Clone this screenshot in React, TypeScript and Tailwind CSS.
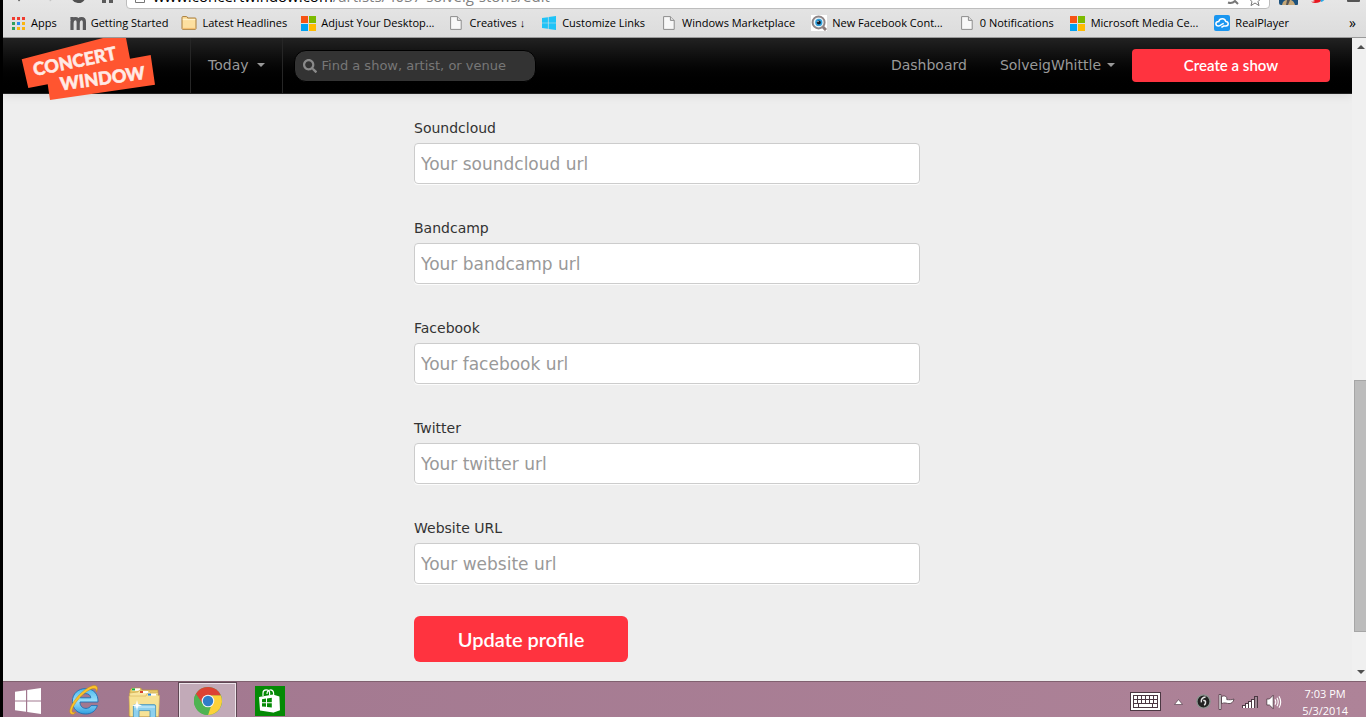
import type { ReactNode } from 'react'
import { FaSearch } from 'react-icons/fa'

type Bookmark = { label: string; icon: ReactNode }

const AppsIcon = () => (
  <svg width="13" height="13" viewBox="0 0 13 13" shapeRendering="crispEdges">
    {['#f03c30', '#f03c30', '#f03c30', '#2ea05c', '#2a8af0', '#fbb50f', '#2ea05c', '#fbb50f', '#fbb50f'].map((fill, i) => (
      <rect key={i} x={(i % 3) * 5} y={Math.floor(i / 3) * 5} width="3" height="3" fill={fill} />
    ))}
  </svg>
)

const MIcon = () => (
  <svg width="16" height="13" viewBox="0 0 16 13" fill="none" stroke="#58585a" strokeWidth="3.2">
    <path d="M2 13V3.5M0.4 1.4H3.2M2 6C2 3 3.6 1.7 5.4 1.7S8.2 3 8.2 5V13M8.2 6C8.2 3 9.8 1.7 11.6 1.7S14.4 3 14.4 5V13" />
  </svg>
)

const FolderIcon = () => (
  <svg width="16" height="14" viewBox="0 0 16 14">
    <path d="M1 12.5V1.5Q1 .6 2 .6H5.5Q6.4.6 6.6 2H14.2Q15 2 15 3V12.5Q15 13.3 14.2 13.3H1.8Q1 13.3 1 12.5Z" fill="#fde0a0" stroke="#a87c3a" />
    <path d="M1.8 3.6H14.2" stroke="#fff4d2" />
    <path d="M1.6 12.4H14.4" stroke="#f6bd6e" />
  </svg>
)

const MicrosoftIcon = () => (
  <svg width="15" height="15" viewBox="0 0 15 15" shapeRendering="crispEdges">
    <rect width="7" height="7" fill="#f65314" />
    <rect x="8" width="7" height="7" fill="#7cbb00" />
    <rect y="8" width="7" height="7" fill="#00a1f1" />
    <rect x="8" y="8" width="7" height="7" fill="#ffbb00" />
  </svg>
)

const PageIcon = () => (
  <svg width="12" height="14" viewBox="0 0 12 14">
    <path d="M.6.6H7.4L11.2 4.4V13.4H.6Z" fill="#f8f8f8" stroke="#8d8d8d" />
    <path d="M7.4.6V4.4H11.2" fill="#e0e0e0" stroke="#8d8d8d" />
  </svg>
)

const WindowsIcon = ({ size, color }: { size: number; color: string }) => (
  <svg width={size} height={size} viewBox="0 0 26 26" fill={color}>
    <path d="M0 3.8L11 2.2V12.4H0ZM12.2 2L26 0V12.4H12.2ZM0 13.6H11V23.8L0 22.2ZM12.2 13.6H26V26L12.2 24Z" />
  </svg>
)

const EyeIcon = () => (
  <svg width="16" height="16" viewBox="0 0 16 16">
    <rect width="16" height="16" fill="#fff" />
    <path d="M11.5 11.5L15 15" stroke="#8a7c7c" strokeWidth="3" />
    <circle cx="7.6" cy="7.4" r="6" fill="#e9f4fa" stroke="#8f8586" strokeWidth="2" />
    <circle cx="7.8" cy="7.4" r="3.6" fill="#2f9fdb" />
    <circle cx="7.8" cy="7.4" r="2" fill="#0c1626" />
    <circle cx="7" cy="6.6" r=".7" fill="#fff" />
  </svg>
)

const RealPlayerIcon = () => (
  <svg width="16" height="16" viewBox="0 0 16 16">
    <rect width="16" height="16" rx="2" fill="#1a96f0" />
    <path d="M7.4 12.4L9.6 11H11.8C13.2 11 14.2 10 14.2 8.8S13.2 6.6 11.8 6.4C11.2 4.6 9.8 3.8 8.4 3.8C6.6 3.8 5.2 4.8 4.8 6.4C3 6.4 1.9 7.4 1.9 8.7C1.9 10.2 3.2 11 4.6 11C6.8 11 7.4 8.6 9.8 8.4" fill="none" stroke="#fff" strokeWidth="1.5" />
  </svg>
)

const BOOKMARKS: Bookmark[] = [
  { label: 'Apps', icon: <AppsIcon /> },
  { label: 'Getting Started', icon: <MIcon /> },
  { label: 'Latest Headlines', icon: <FolderIcon /> },
  { label: 'Adjust Your Desktop...', icon: <MicrosoftIcon /> },
]

const MORE_BOOKMARKS: Bookmark[] = [
  { label: 'Creatives ↓', icon: <PageIcon /> },
  { label: 'Customize Links', icon: <WindowsIcon size={14} color="#1fc3f7" /> },
  { label: 'Windows Marketplace', icon: <PageIcon /> },
  { label: 'New Facebook Cont...', icon: <EyeIcon /> },
  { label: '0 Notifications', icon: <PageIcon /> },
  { label: 'Microsoft Media Ce...', icon: <MicrosoftIcon /> },
  { label: 'RealPlayer', icon: <RealPlayerIcon /> },
]

const FIELDS = [
  { id: 'soundcloud', label: 'Soundcloud', placeholder: 'Your soundcloud url' },
  { id: 'bandcamp', label: 'Bandcamp', placeholder: 'Your bandcamp url' },
  { id: 'facebook', label: 'Facebook', placeholder: 'Your facebook url' },
  { id: 'twitter', label: 'Twitter', placeholder: 'Your twitter url' },
  { id: 'website', label: 'Website URL', placeholder: 'Your website url' },
]

const BookmarkLink = ({ label, icon }: Bookmark) => (
  <a href="#" className="flex items-center gap-[5px]">
    <span className="w-4 h-4 flex items-center justify-center">{icon}</span>
    {label}
  </a>
)

function BrowserBar() {
  return (
    <div className="shrink-0 bg-gradient-to-b from-[#e6e6e6] to-[#dcdcdc] border-b border-[#999]">
      {/* Only the lower edge of the toolbar is on screen */}
      <div className="flex items-end h-[9px] overflow-hidden">
        <svg className="w-[123px] h-[9px] shrink-0" viewBox="0 0 123 9">
          <path d="M13-3L16 1.6L18-1Z" fill="#555" />
          <path d="M46-1H50L47 1.4Z" fill="#c4c4c4" />
          <path d="M70-3A5.6 5.6 0 0 0 80.6-2" fill="none" stroke="#505050" strokeWidth="3.4" />
          <path d="M99-2H103V3H99ZM106-2H110V3H106Z" fill="#5a5a5a" />
        </svg>
        <div className="flex-1 flex items-end justify-between h-8 bg-white border border-[#bdbdbd] rounded-sm pl-2 pr-1.5">
          <div className="flex items-end gap-2 pb-1">
            <svg className="mb-px" width="10" height="13" viewBox="0 0 10 13">
              <path d="M.5.5H6L9.5 4V12.5H.5Z" fill="#fff" stroke="#777" />
            </svg>
            <span className="font-['Open_Sans','Noto_Sans',sans-serif] text-[15px] leading-4 text-[#808080] whitespace-nowrap">
              <span className="text-black">www.concertwindow.com</span>/artists/4037-solveig-stoffs/edit
            </span>
          </div>
          <svg width="36" height="14" viewBox="0 0 36 14" fill="none" stroke="#777">
            <path d="M1 8.5Q5 10 8 7L11 10" strokeWidth="2" />
            <path d="M28 0L30 4L34 4.6L31 7.6L32 11.6L28 9L24 11.6L25 7.6L22 4.6" />
          </svg>
        </div>
        <svg className="w-24 h-[9px] shrink-0" viewBox="0 0 96 9">
          <path d="M9-2H28V4Q28 5 27 5H11Q9 5 9 3Z" fill="#1c527e" />
          <path d="M12 5Q13 0 17 0H21Q24 1 25 5Z" fill="#c6a878" />
          <path d="M17 0H20L18 5H16Z" fill="#555" />
          <path d="M41-1H52Q51 3 45 3Q42 3 41 1.6Q44 2 45 1Z" fill="#e8171f" />
          <path d="M50-1H55Q54 1 51 2Z" fill="#27aae8" />
          <rect x="77" y="-1" width="13" height="3" rx="1" fill="#555" />
        </svg>
      </div>
      <nav className="flex items-center h-7 pl-[7px] pr-2.5 gap-3.5 font-['Open_Sans','Noto_Sans',sans-serif] text-[11px] text-black whitespace-nowrap overflow-hidden">
        <div className="flex items-center gap-[13px]">
          {BOOKMARKS.map((b) => <BookmarkLink key={b.label} {...b} />)}
        </div>
        <div className="flex items-center gap-4">
          {MORE_BOOKMARKS.map((b) => <BookmarkLink key={b.label} {...b} />)}
        </div>
        <button type="button" aria-label="More bookmarks" className="ml-auto text-sm leading-none">»</button>
      </nav>
    </div>
  )
}

const Logo = () => (
  <svg width="136" height="63" viewBox="0 0 136 63" className="absolute left-[17px] top-0 z-10">
    <path d="M1.7 21.3L83 0H106L110 20.7L130.7 17L135 46.7L30 62L27.7 46.3L8.3 50Z" fill="#ff5530" />
    <g fill="#ffeae5" stroke="#ffeae5" strokeWidth=".5" fontFamily="Lato, sans-serif" fontWeight="900" fontSize="18">
      <text transform="translate(14.5 38) rotate(-11.5)">CONCERT</text>
      <text transform="translate(41 52.5) rotate(-7.7)">WINDOW</text>
    </g>
  </svg>
)

const Caret = () => <span className="w-0 h-0 border-x-4 border-x-transparent border-t-4 border-t-[#999]" />

function SiteHeader() {
  return (
    <header className="relative z-10 shrink-0 flex h-14 bg-gradient-to-b from-[#222] to-black border-b border-[#222] text-sm text-[#999] shadow-[0_1px_10px_rgba(0,0,0,0.1)]">
      <a href="#" aria-label="Concert Window" className="relative w-[187px] shrink-0">
        <Logo />
      </a>
      <button type="button" className="flex items-center gap-2 px-[17px] pb-0.5 border-x border-[#262626]">
        Today <Caret />
      </button>
      <div className="flex items-center pl-[11px]">
        <label className="flex items-center gap-[5px] w-[242px] h-8 px-2 rounded-xl bg-[#333] border border-black">
          <FaSearch className="w-3.5 h-3.5 shrink-0 text-[#8a8a8a]" />
          <input
            type="search"
            aria-label="Search"
            placeholder="Find a show, artist, or venue"
            className="w-full min-w-0 pt-0.5 bg-transparent outline-none text-[13px] text-white placeholder:text-[#777]"
          />
        </label>
      </div>
      <div className="ml-auto flex items-center pr-[22px]">
        <a href="#" className="mr-[33px] pb-0.5">Dashboard</a>
        <button type="button" className="flex items-center gap-1.5 mr-[17px] pb-0.5">
          SolveigWhittle <Caret />
        </button>
        <button type="button" className="w-[198px] h-[33px] rounded bg-[#ff333f] text-white font-['Lato',sans-serif] font-semibold text-[15px]">
          Create a show
        </button>
      </div>
    </header>
  )
}

function ProfileForm() {
  return (
    <main className="flex-1 pt-6 pr-[21px]">
      <form className="w-full max-w-[506px] mx-auto" onSubmit={(e) => e.preventDefault()}>
        <div className="flex flex-col gap-[34px]">
          {FIELDS.map((f) => (
            <div key={f.id} className="flex flex-col gap-[5px]">
              <label htmlFor={f.id} className="text-sm leading-5 text-[#333]">{f.label}</label>
              <input
                id={f.id}
                type="text"
                placeholder={f.placeholder}
                className="w-full h-[41px] px-1.5 bg-white border border-[#ccc] rounded text-[17px] text-[#555] placeholder:text-[#999] shadow-[0_1px_0_rgba(255,255,255,0.8)]"
              />
            </div>
          ))}
        </div>
        <button type="submit" className="mt-8 w-[214px] h-[46px] rounded-md bg-[#ff333f] text-white font-['Lato',sans-serif] font-semibold text-xl">
          Update profile
        </button>
      </form>
    </main>
  )
}

function Scrollbar() {
  return (
    <div className="w-3.5 shrink-0 bg-[#f0f0f0] flex flex-col items-end justify-between py-[7px]">
      <span className="mr-px w-0 h-0 border-x-4 border-x-transparent border-b-4 border-b-[#505050]" />
      <span className="w-full flex-1 flex flex-col pl-0.5">
        <span className="grow-[332]" />
        <span className="grow-[251] bg-[#bcbcbc] border border-r-0 border-[#a6a6a6]" />
        <span className="grow-[38]" />
      </span>
      <span className="mr-px w-0 h-0 border-x-4 border-x-transparent border-t-4 border-t-[#505050]" />
    </div>
  )
}

const ExplorerLetter = () => (
  <svg width="32" height="32" viewBox="0 0 32 32">
    <defs>
      <linearGradient id="ie" x1="0" y1="0" x2="0" y2="1">
        <stop offset="0" stopColor="#4cb9ee" />
        <stop offset=".5" stopColor="#9be0fb" />
        <stop offset="1" stopColor="#2f9fe0" />
      </linearGradient>
    </defs>
    <path d="M30 18H12C12 22 14.4 24.4 18 24.4C20.4 24.4 22 23.4 23 21.6H29.4C27.6 27 23.6 30 17.6 30C10 30 4.4 25 4.4 17.4S10 4.6 17.6 4.6C25.4 4.6 30.4 9.8 30 18ZM12.2 13.8H22.8C22.6 11.2 20.6 9.6 17.6 9.6S12.8 11.2 12.2 13.8Z" fill="url(#ie)" stroke="#1d6fb4" strokeWidth=".9" />
    <path d="M5.4 30.2C-1 31 1.8 22 8.6 13.8C15.6 5.2 25.6-.6 28.6 2.2C29.8 3.4 29.6 5.4 28.6 7.8C28.6 5 27 3.8 24 4.8C18 6.8 10 14.4 6 21.6C2.4 28 4 29.4 8 28.2Z" fill="#fbc32a" stroke="#c98812" strokeWidth=".5" />
  </svg>
)

const FileFolders = () => (
  <svg width="32" height="32" viewBox="0 0 32 32">
    <path d="M2 4L4 2H13L14 4H30V30H1Z" fill="#e9c968" stroke="#b5923e" strokeWidth=".6" />
    <rect x="4" y="2.4" width="8" height="2.4" fill="#fff" />
    <rect x="4" y="2.4" width="3" height="2" fill="#14a83a" />
    <path d="M1.6 7L10 6L11 4.4H20L22 6.4H30V30H2Z" fill="#f8e59e" stroke="#cda84a" strokeWidth=".6" />
    <rect x="12" y="5" width="8" height="2.2" fill="#fff" />
    <rect x="12" y="5" width="3" height="2" fill="#d8402c" />
    <path d="M1 10H18L19 7.6H28L30 9.6H31.6L30.6 30.6H2Z" fill="#f7e295" stroke="#d3b055" strokeWidth=".6" />
    <rect x="20" y="7.6" width="8" height="2" fill="#fff" />
    <rect x="20" y="7.6" width="3" height="2" fill="#2a86d8" />
    <path d="M5.4 32V20Q5.4 18.6 7 18.6H26Q27.6 18.6 27.6 20V32H22V24.6H11V32Z" fill="#8dd0ee" stroke="#4290b8" strokeWidth=".8" />
    <path d="M6 21H27" stroke="#d5f2fd" />
    <path d="M9 14L10 18L14 19.4L10 20.6L9 25L8 20.6L4 19.4L8 18Z" fill="#fff" />
  </svg>
)

const ChromeIcon = () => (
  <svg width="28" height="28" viewBox="0 0 28 28">
    <circle cx="14" cy="14" r="14" fill="#4caf50" />
    <path d="M14 14L14.1 28A14 14 0 0 0 26.7 8.2H14Z" fill="#fdd13a" />
    <path d="M1.9 7A14 14 0 0 1 26.7 8.2H14L8.4 16.6Z" fill="#dc4234" />
    <path d="M1.9 7L8.8 17A6 6 0 0 0 17 19.2L14.1 28A14 14 0 0 1 1.9 7Z" fill="#4fb352" />
    <circle cx="14" cy="14" r="6.3" fill="#f4f4f4" />
    <circle cx="14" cy="14" r="5.2" fill="#2f7dc8" />
  </svg>
)

const StoreIcon = () => (
  <svg width="30" height="30" viewBox="0 0 30 30">
    <rect width="30" height="30" fill="#058a05" />
    <path d="M4 11L18 8.4V26.4L5 24.6ZM18 8.4L24.4 10.6L25 24.2L18 26.8Z" fill="#fff" />
    <path d="M8 10V7C8 3 14 3 14.6 6.6V9M12 8C12 3 18 2.6 18.6 7V9" fill="none" stroke="#fff" strokeWidth="1.2" />
    <path d="M7 13.2L11 12.6V16.2H7ZM12 12.4L16.8 11.8V16.2H12ZM7 17.2H11V20.8L7 20.4ZM12 17.2H16.8V21.6L12 21Z" fill="#058a05" />
  </svg>
)

const KeyboardIcon = () => (
  <svg width="31" height="19" viewBox="0 0 31 19" shapeRendering="crispEdges">
    <rect x=".5" y=".5" width="30" height="18" rx="1" fill="#fff" stroke="#4c3843" />
    <rect x="3" y="3" width="25" height="13" fill="#4c3843" />
    {[4, 8].map((y) => [4, 8, 12, 16, 20, 24].map((x) => <rect key={`${x}-${y}`} x={x} y={y} width="3" height="3" fill="#fff" />))}
    <path d="M4 12H8V15H4ZM9 12H22V15H9ZM23 12H27V15H23Z" fill="#fff" />
  </svg>
)

const SignalIcon = () => (
  <svg width="17" height="14" viewBox="0 0 17 14" shapeRendering="crispEdges">
    <path d="M0 13V10H3V8H6V6H9V4H12V1H16V13Z" fill="#4c3843" />
    <path d="M1 11H3V13H1ZM4 9H6V13H4ZM7 7H9V13H7ZM10 5H12V13H10Z" fill="#fff" />
    <path d="M13 2H15V13H13Z" fill="#a08a96" />
  </svg>
)

function Taskbar() {
  return (
    <footer className="shrink-0 flex items-start h-9 overflow-hidden bg-gradient-to-r from-[#a1778f] to-[#ae8398] border-t border-[#80606f]">
      <div className="flex items-start">
        <button type="button" aria-label="Start" className="pt-1.5 pl-3"><WindowsIcon size={26} color="#fff" /></button>
        <button type="button" aria-label="Internet Explorer" className="pt-0.5 pl-[27px]"><ExplorerLetter /></button>
        <button type="button" aria-label="File Explorer" className="pt-1 pl-7"><FileFolders /></button>
        <button type="button" aria-label="Chrome" className="ml-[18px] w-[59px] h-10 pt-1 flex justify-center border border-[#5e4753] bg-[#c2aab8] shadow-[inset_0_0_0_1px_#eee3ea]">
          <ChromeIcon />
        </button>
        <button type="button" aria-label="Store" className="pt-1 pl-[18px]"><StoreIcon /></button>
      </div>
      <div className="ml-auto flex items-center gap-[7px] h-[39px] pr-[18px] text-white">
        <KeyboardIcon />
        <svg className="mx-1.5" width="9" height="6" viewBox="0 0 9 6">
          <path d="M4.5.5L8.5 5.5H.5Z" fill="#fff" stroke="#5a4450" strokeWidth=".7" />
        </svg>
        <svg width="15" height="15" viewBox="0 0 15 15">
          <circle cx="7.5" cy="7.5" r="6.6" fill="#222" stroke="#8d9490" strokeWidth="1.4" />
          <path d="M9.6 3C6.4 3.2 4.6 5.6 5.4 8.4M7.2 6.6C10 6 10.4 9 8.2 11.2" fill="none" stroke="#e4e4e4" strokeWidth="1.5" />
        </svg>
        <svg width="17" height="16" viewBox="0 0 17 16">
          <path d="M1 .5H3V15.5H1ZM3.5 2.5C6 1.4 7.4 2 8.8 3.4V5.6C11 5.8 13.6 6 16 5C15.4 8 13.6 9.6 11 9.6C8.8 9.6 7 8 3.5 9.6Z" fill="#fff" stroke="#4c3843" strokeWidth=".8" />
        </svg>
        <SignalIcon />
        <svg width="16" height="16" viewBox="0 0 16 16">
          <path d="M.8 5H3.4L7.2 1.2V14.8L3.4 11H.8Z" fill="#fff" stroke="#4c3843" strokeWidth=".8" />
          <path d="M9 5.4Q10.6 8 9 10.6M11 3.8Q13.4 8 11 12.2M13 2.2Q16.4 8 13 13.8" fill="none" stroke="#fff" strokeWidth="1.1" />
        </svg>
        <div className="ml-[13px] text-center font-['Open_Sans','Noto_Sans',sans-serif] text-[11px] leading-[17px] whitespace-nowrap">
          <div>7:03 PM</div>
          <div>5/3/2014</div>
        </div>
      </div>
    </footer>
  )
}

export default function App() {
  return (
    <div className="h-screen flex flex-col overflow-hidden border-l-[3px] border-black bg-[#eee] font-['DejaVu_Sans',Verdana,sans-serif]">
      <BrowserBar />
      <div className="flex-1 min-h-0 flex">
        <div className="flex-1 min-w-0 flex flex-col overflow-hidden">
          <SiteHeader />
          <ProfileForm />
        </div>
        <Scrollbar />
      </div>
      <Taskbar />
    </div>
  )
}
